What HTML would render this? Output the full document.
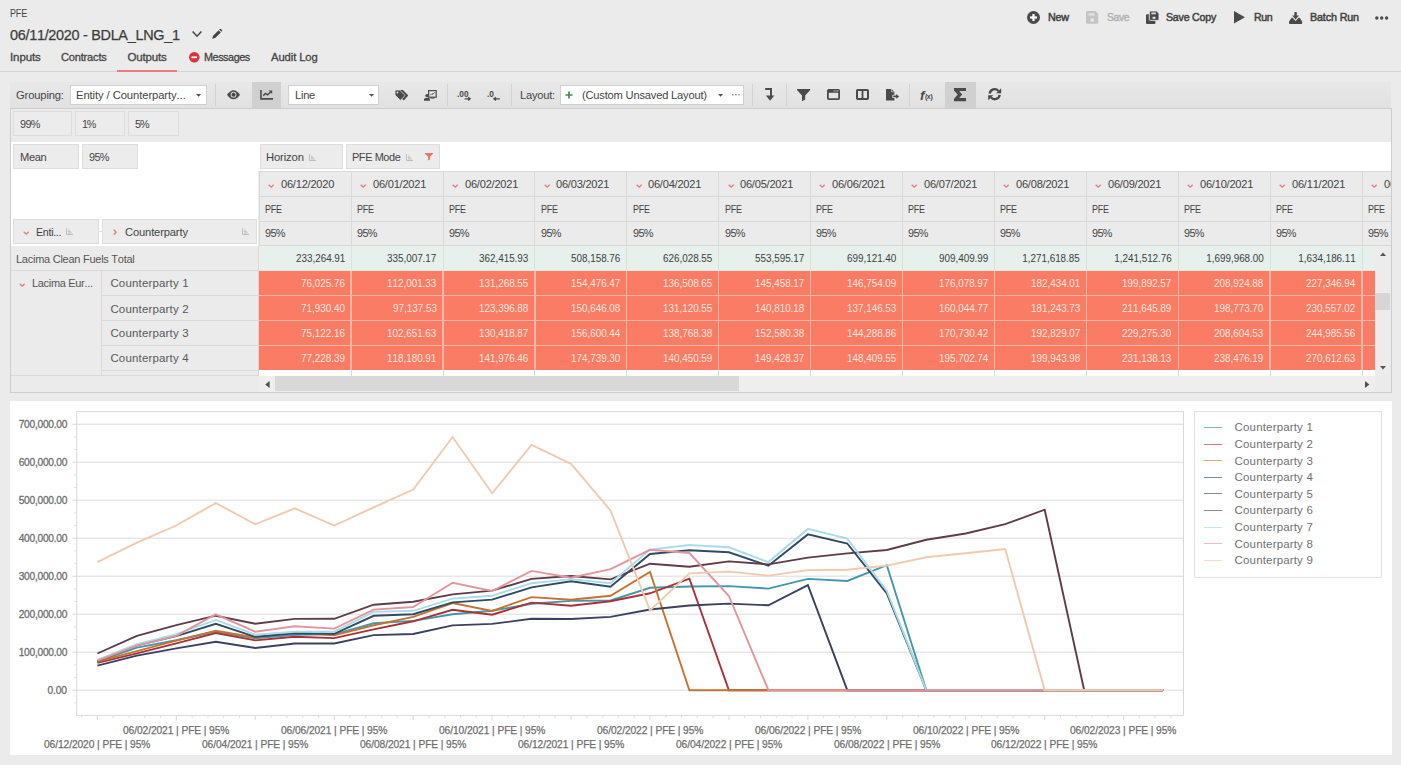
<!DOCTYPE html>
<html lang="en"><head><meta charset="utf-8"><title>PFE - 06/11/2020 - BDLA_LNG_1</title><style>
html,body{margin:0;padding:0}
body{width:1401px;height:765px;position:relative;overflow:hidden;background:#ebebeb;font-family:'Liberation Sans',sans-serif;font-kerning:none}
div,svg,span.t{position:absolute}
span.t{white-space:pre}
svg{overflow:visible}
</style></head><body>
<span class="t" style="top:6px;line-height:14px;font-size:11.5px;color:#444444;letter-spacing:-0.162px;left:9.70px;transform:scaleX(0.7800);transform-origin:0 50%;">PFE</span>
<span class="t" style="top:25px;line-height:19px;font-size:15px;color:#3c3c3c;-webkit-text-stroke:0.25px #3c3c3c;letter-spacing:-0.318px;left:10.00px;transform:scaleX(0.9633);transform-origin:0 50%;">06/11/2020 - BDLA_LNG_1</span>
<svg style="left:191px;top:29px" width="12" height="10" viewBox="0 0 12 10"><polyline points="1.6,2.6 6,7.2 10.4,2.6" fill="none" stroke="#444" stroke-width="1.5"/></svg>
<svg style="left:212px;top:29px" width="10" height="10" viewBox="0 0 10 10"><path d="M0.3,9.7 L0.9,6.9 L6.6,1.2 L8.8,3.4 L3.1,9.1 Z M7.2,0.6 L7.9,-0.1 Q8.4,-0.5 8.9,0 L10,1.1 Q10.5,1.6 10,2.1 L9.4,2.8 Z" fill="#444"/></svg>
<span class="t" style="top:50px;line-height:14px;font-size:11.5px;color:#444444;-webkit-text-stroke:0.3px #444444;letter-spacing:-0.106px;left:10.00px;">Inputs</span>
<span class="t" style="top:50px;line-height:14px;font-size:11.5px;color:#444444;-webkit-text-stroke:0.3px #444444;letter-spacing:-0.221px;left:61.20px;transform:scaleX(0.9653);transform-origin:0 50%;">Contracts</span>
<span class="t" style="top:50px;line-height:14px;font-size:11.5px;color:#444444;-webkit-text-stroke:0.3px #444444;letter-spacing:-0.164px;left:127.40px;">Outputs</span>
<svg style="left:188.9px;top:52px" width="10.6" height="10.6" viewBox="0 0 10.6 10.6"><circle cx="5.3" cy="5.3" r="5.3" fill="#d8343c"/><rect x="2.5" y="4.4" width="5.6" height="1.8" fill="#fff"/></svg>
<span class="t" style="top:50px;line-height:14px;font-size:11.5px;color:#444444;-webkit-text-stroke:0.3px #444444;letter-spacing:-0.472px;left:204.00px;transform:scaleX(0.9407);transform-origin:0 50%;">Messages</span>
<span class="t" style="top:50px;line-height:14px;font-size:11.5px;color:#444444;-webkit-text-stroke:0.3px #444444;letter-spacing:-0.115px;left:271.20px;transform:scaleX(0.9814);transform-origin:0 50%;">Audit Log</span>
<div style="left:0px;top:71px;width:1401px;height:1px;background:#d6d6d6;"></div>
<div style="left:117px;top:70px;width:60px;height:2px;background:#ea7d75;"></div>
<svg style="left:1027px;top:11px" width="13" height="13" viewBox="0 0 13 13"><circle cx="6.5" cy="6.5" r="6.5" fill="#4a4a4a"/><rect x="3" y="5.4" width="7" height="2.2" fill="#fff"/><rect x="5.4" y="3" width="2.2" height="7" fill="#fff"/></svg>
<span class="t" style="top:10px;line-height:14px;font-size:11px;color:#444444;-webkit-text-stroke:0.5px #444444;letter-spacing:-0.234px;left:1048.00px;transform:scaleX(0.9792);transform-origin:0 50%;">New</span>
<svg style="left:1086px;top:11.2px" width="12.2" height="12.7" viewBox="0 0 12.2 12.7"><path d="M0,1.2 Q0,0 1.2,0 H9.4 L12.2,2.8 V11.5 Q12.2,12.7 11,12.7 H1.2 Q0,12.7 0,11.5 Z" fill="#c4c4c4"/><rect x="2.4" y="2" width="6.2" height="2.7" fill="#dedede"/><rect x="4.5" y="7.5" width="3.3" height="3.1" fill="#e9e9e9"/></svg>
<span class="t" style="top:10px;line-height:14px;font-size:11px;color:#b0b0b0;-webkit-text-stroke:0.4px #b0b0b0;letter-spacing:-0.453px;left:1106.70px;transform:scaleX(0.9486);transform-origin:0 50%;">Save</span>
<svg style="left:1145.8px;top:11px" width="13.2" height="13" viewBox="0 0 13.2 13"><path d="M0,4.2 Q0,3.2 1,3.2 H8.4 Q9.4,3.2 9.4,4.2 V12 Q9.4,13 8.4,13 H1 Q0,13 0,12 Z" fill="#4a4a4a"/><path d="M3.3,1 Q3.3,0 4.3,0 H10.6 L13,2.4 V8.4 Q13,9.4 12,9.4 H4.3 Q3.3,9.4 3.3,8.4 Z" fill="#4a4a4a" stroke="#ebebeb" stroke-width="0.9"/><rect x="5.3" y="1.5" width="4.6" height="1.8" fill="#dcdcdc"/><rect x="6.6" y="5.8" width="2.8" height="2" fill="#ebebeb"/></svg>
<span class="t" style="top:10px;line-height:14px;font-size:11px;color:#444444;-webkit-text-stroke:0.5px #444444;letter-spacing:-0.234px;left:1166.40px;transform:scaleX(0.9664);transform-origin:0 50%;">Save Copy</span>
<svg style="left:1234px;top:11.2px" width="11" height="12.6" viewBox="0 0 11 12.6"><path d="M0,0 L11,6.3 L0,12.6 Z" fill="#4a4a4a"/></svg>
<span class="t" style="top:10px;line-height:14px;font-size:11px;color:#444444;-webkit-text-stroke:0.5px #444444;letter-spacing:-0.386px;left:1253.70px;transform:scaleX(0.9632);transform-origin:0 50%;">Run</span>
<svg style="left:1289px;top:11.6px" width="13.2" height="12" viewBox="0 0 13.2 12"><path d="M5.4,0 H7.8 V3.6 H10 L6.6,7.4 L3.2,3.6 H5.4 Z" fill="#4a4a4a"/><path d="M2.6,5.8 H3.6 L6.6,9 L9.6,5.8 H10.6 L13.2,9.4 V11 Q13.2,12 12.2,12 H1 Q0,12 0,11 V9.4 Z" fill="#4a4a4a"/></svg>
<span class="t" style="top:10px;line-height:14px;font-size:11px;color:#444444;-webkit-text-stroke:0.5px #444444;letter-spacing:-0.145px;left:1309.90px;transform:scaleX(0.9779);transform-origin:0 50%;">Batch Run</span>
<svg style="left:1375.4px;top:15.8px" width="13.4" height="4" viewBox="0 0 13.4 4"><circle cx="1.8" cy="2" r="1.7" fill="#4a4a4a"/><circle cx="6.7" cy="2" r="1.7" fill="#4a4a4a"/><circle cx="11.6" cy="2" r="1.7" fill="#4a4a4a"/></svg>
<div style="left:10px;top:82px;width:1381px;height:26px;background:linear-gradient(#e8e8e8,#e1e1e1);"></div>
<span class="t" style="top:88px;line-height:14px;font-size:11.5px;color:#444444;letter-spacing:-0.161px;left:16.00px;transform:scaleX(0.9751);transform-origin:0 50%;">Grouping:</span>
<div style="left:69.5px;top:85px;width:137.5px;height:19.6px;background:#fff;border:1px solid #d0d0d0;box-sizing:border-box;"></div>
<span class="t" style="top:88px;line-height:14px;font-size:11.5px;color:#444444;letter-spacing:-0.103px;left:76.00px;transform:scaleX(0.9798);transform-origin:0 50%;">Entity / Counterparty...</span>
<svg style="left:196.4px;top:93.9px" width="5.2" height="2.8" viewBox="0 0 5.2 2.8"><path d="M0,0 H5.2 L2.6,2.8 Z" fill="#555"/></svg>
<div style="left:215px;top:84px;width:1px;height:22px;background:#d2d2d2;"></div>
<svg style="left:226.6px;top:90px" width="13" height="9.5" viewBox="0 0 13 9.5"><path d="M0,4.75 Q6.5,-4.4 13,4.75 Q6.5,13.9 0,4.75 Z" fill="#4a4a4a"/><circle cx="6.5" cy="4.75" r="2.9" fill="#d6d6d6"/><circle cx="6.5" cy="4.75" r="2" fill="#4a4a4a"/></svg>
<div style="left:252.2px;top:82px;width:28.8px;height:26px;background:#d0d0d0;"></div>
<svg style="left:260.2px;top:90.2px" width="13.2" height="9.8" viewBox="0 0 13.2 9.8"><path d="M0.95,0 V8.85 H13" fill="none" stroke="#4a4a4a" stroke-width="1.6"/><path d="M3.2,5.6 L5.6,3.4 L7.6,4.8 L10.6,2" fill="none" stroke="#4a4a4a" stroke-width="1.5"/><path d="M8.6,0.5 H12.2 V4.1 Z" fill="#4a4a4a"/></svg>
<div style="left:288.3px;top:85px;width:91.2px;height:19.6px;background:#fff;border:1px solid #d0d0d0;box-sizing:border-box;"></div>
<span class="t" style="top:88px;line-height:14px;font-size:11.5px;color:#444444;letter-spacing:-0.250px;left:294.80px;transform:scaleX(0.9667);transform-origin:0 50%;">Line</span>
<svg style="left:369px;top:93.9px" width="5.2" height="2.8" viewBox="0 0 5.2 2.8"><path d="M0,0 H5.2 L2.6,2.8 Z" fill="#555"/></svg>
<svg style="left:394.6px;top:89.6px" width="13.4" height="10.8" viewBox="0 0 13.4 10.8"><path d="M0,0.9 Q0,0 0.9,0 H4.6 L9.6,5 Q10.1,5.5 9.6,6 L5.9,10 Q5.4,10.5 4.9,10 L0,5 Z" fill="#4a4a4a" transform="translate(3.3,0)"/><path d="M0,0.9 Q0,0 0.9,0 H4.6 L9.6,5 Q10.1,5.5 9.6,6 L5.9,10 Q5.4,10.5 4.9,10 L0,5 Z" fill="#4a4a4a" stroke="#e3e3e3" stroke-width="0.8"/><circle cx="2.4" cy="2.5" r="0.95" fill="#e3e3e3"/></svg>
<svg style="left:424.2px;top:89.6px" width="12.8" height="10.8" viewBox="0 0 12.8 10.8"><rect x="4.6" y="0.6" width="7.6" height="6.6" fill="none" stroke="#4a4a4a" stroke-width="1.2"/><path d="M6.2,5.4 L8,3.6 L9,4.4 L10.6,2.4" fill="none" stroke="#4a4a4a" stroke-width="0.9"/><circle cx="3" cy="5.6" r="1.7" fill="#4a4a4a"/><path d="M0,10.8 V9.6 Q0,7.8 3,7.8 Q6,7.8 6,9.6 V10.8 Z" fill="#4a4a4a"/><rect x="6.4" y="7.6" width="4" height="1" fill="#4a4a4a"/></svg>
<div style="left:447.2px;top:84px;width:1px;height:22px;background:#d2d2d2;"></div>
<svg style="left:457.4px;top:89.6px" width="14" height="11" viewBox="0 0 14 11"><text x="0" y="6.5" font-family="Liberation Sans,sans-serif" font-size="8.3" font-weight="bold" fill="#4a4a4a">.00</text><path d="M7.6,8.8 H13 M11.2,7.1 L13.3,8.8 L11.2,10.5" fill="none" stroke="#4a4a4a" stroke-width="1.15"/></svg>
<svg style="left:487px;top:89.6px" width="14" height="11" viewBox="0 0 14 11"><text x="0" y="6.5" font-family="Liberation Sans,sans-serif" font-size="8.3" font-weight="bold" fill="#4a4a4a">.0</text><path d="M7,8.8 H12.8 M8.9,7.1 L6.8,8.8 L8.9,10.5" fill="none" stroke="#4a4a4a" stroke-width="1.15"/></svg>
<div style="left:510.6px;top:84px;width:1px;height:22px;background:#d2d2d2;"></div>
<span class="t" style="top:88px;line-height:14px;font-size:11.5px;color:#444444;letter-spacing:-0.219px;left:520.00px;transform:scaleX(0.9664);transform-origin:0 50%;">Layout:</span>
<div style="left:560px;top:85px;width:183.6px;height:19.6px;background:#fff;border:1px solid #d0d0d0;box-sizing:border-box;"></div>
<svg style="left:564.6px;top:91px" width="8" height="8" viewBox="0 0 8 8"><path d="M4,0.4 V7.6 M0.4,4 H7.6" stroke="#3f8f55" stroke-width="1.7" fill="none"/></svg>
<span class="t" style="top:88px;line-height:14px;font-size:11.5px;color:#444444;letter-spacing:-0.202px;left:582.00px;transform:scaleX(0.9678);transform-origin:0 50%;">(Custom Unsaved Layout)</span>
<svg style="left:718.4px;top:93.9px" width="5.2" height="2.8" viewBox="0 0 5.2 2.8"><path d="M0,0 H5.2 L2.6,2.8 Z" fill="#555"/></svg>
<svg style="left:732px;top:94.3px" width="8" height="1.6" viewBox="0 0 8 1.6"><circle cx="0.8" cy="0.8" r="0.75" fill="#666"/><circle cx="3.9" cy="0.8" r="0.75" fill="#666"/><circle cx="7" cy="0.8" r="0.75" fill="#666"/></svg>
<div style="left:752.4px;top:84px;width:1px;height:22px;background:#d2d2d2;"></div>
<svg style="left:764.8px;top:88.4px" width="10" height="13" viewBox="0 0 10 13"><path d="M0.2,1 H6 V9" fill="none" stroke="#4a4a4a" stroke-width="1.9"/><path d="M0.9,7.6 L5.1,12.7 L9.3,7.6 Z" fill="#4a4a4a"/></svg>
<div style="left:786.4px;top:84px;width:1px;height:22px;background:#d2d2d2;"></div>
<svg style="left:797.4px;top:88.6px" width="13.2" height="12.2" viewBox="0 0 13.2 12.2"><path d="M0,0 H13.2 V1 L8.2,6.4 V10.6 L5,12.2 V6.4 L0,1 Z" fill="#4a4a4a"/></svg>
<svg style="left:826.8px;top:89.2px" width="13" height="11" viewBox="0 0 13 11"><rect x="0.9" y="0.9" width="11.2" height="9.2" rx="0.8" fill="none" stroke="#4a4a4a" stroke-width="1.8"/><rect x="0.9" y="0.9" width="11.2" height="2.9" fill="#4a4a4a"/><rect x="6.6" y="1.4" width="1.1" height="1.1" fill="#cfcfcf"/><rect x="8.4" y="1.4" width="1.1" height="1.1" fill="#cfcfcf"/><rect x="10.2" y="1.4" width="1.1" height="1.1" fill="#cfcfcf"/></svg>
<svg style="left:856px;top:89.3px" width="13" height="11" viewBox="0 0 13 11"><rect x="1" y="1" width="11" height="9" rx="0.8" fill="none" stroke="#4a4a4a" stroke-width="2"/><rect x="5.6" y="1" width="1.8" height="9" fill="#4a4a4a"/></svg>
<svg style="left:885.6px;top:89px" width="13.2" height="11.4" viewBox="0 0 13.2 11.4"><path d="M0,0 H5.6 L8.4,2.8 V5.8 H6.4 V9 H8.4 V11.4 H0 Z" fill="#4a4a4a"/><path d="M5.6,0 V2.8 H8.4" fill="none" stroke="#e3e3e3" stroke-width="0.7"/><path d="M7.2,6.6 H10.2 V5 L13.2,7.4 L10.2,9.8 V8.2 H7.2 Z" fill="#4a4a4a"/></svg>
<div style="left:908.6px;top:84px;width:1px;height:22px;background:#d2d2d2;"></div>
<svg style="left:919.6px;top:88.6px" width="14" height="13" viewBox="0 0 14 13"><text x="0" y="10.6" font-family="Liberation Sans,sans-serif" font-style="italic" font-weight="bold" font-size="13.5" fill="#4a4a4a">f</text><text x="4.9" y="10.4" font-family="Liberation Sans,sans-serif" font-weight="bold" font-size="7" fill="#4a4a4a" letter-spacing="-0.35">(x)</text></svg>
<div style="left:945.4px;top:82px;width:30.2px;height:26px;background:#d0d0d0;"></div>
<svg style="left:954.2px;top:88px" width="12" height="13.2" viewBox="0 0 12 13.2"><path d="M0,0 H12 V3.1 H5.2 L8.2,6.6 L5.2,10.1 H12 V13.2 H0 V10.7 L3.7,6.6 L0,2.5 Z" fill="#4a4a4a"/></svg>
<svg style="left:987.6px;top:88.4px" width="13.4" height="12.4" viewBox="0 0 13.4 12.4"><path d="M1.7,5.6 A5,5 0 0 1 10.4,2.9" fill="none" stroke="#4a4a4a" stroke-width="2.3"/><path d="M13.2,0.2 V5.2 H8.2 Z" fill="#4a4a4a"/><path d="M11.7,6.8 A5,5 0 0 1 3,9.5" fill="none" stroke="#4a4a4a" stroke-width="2.3"/><path d="M0.2,12.2 V7.2 H5.2 Z" fill="#4a4a4a"/></svg>
<div style="left:10px;top:107.5px;width:1381.5px;height:285px;background:#ebebeb;border:1px solid #cdcdcd;box-sizing:border-box;"></div>
<div style="left:11px;top:141.5px;width:1379.5px;height:104.7px;background:#fff;"></div>
<div style="left:13px;top:111px;width:59px;height:25.4px;background:#ececec;border:1px solid #dddddd;box-sizing:border-box;"></div>
<span class="t" style="top:117px;line-height:14px;font-size:11.5px;color:#444444;letter-spacing:-0.670px;left:19.50px;transform:scaleX(0.9450);transform-origin:0 50%;">99%</span>
<div style="left:75px;top:111px;width:50.4px;height:25.4px;background:#ececec;border:1px solid #dddddd;box-sizing:border-box;"></div>
<span class="t" style="top:117px;line-height:14px;font-size:11.5px;color:#444444;letter-spacing:-1.192px;left:82.00px;transform:scaleX(0.9331);transform-origin:0 50%;">1%</span>
<div style="left:128px;top:111px;width:51.4px;height:25.4px;background:#ececec;border:1px solid #dddddd;box-sizing:border-box;"></div>
<span class="t" style="top:117px;line-height:14px;font-size:11.5px;color:#444444;letter-spacing:-1.078px;left:135.00px;transform:scaleX(0.9391);transform-origin:0 50%;">5%</span>
<div style="left:13px;top:144.2px;width:66.2px;height:24.6px;background:#ececec;border:1px solid #dddddd;box-sizing:border-box;"></div>
<span class="t" style="top:150px;line-height:14px;font-size:11.5px;color:#444444;letter-spacing:-0.342px;left:20.00px;transform:scaleX(0.9656);transform-origin:0 50%;">Mean</span>
<div style="left:82px;top:144.2px;width:56.4px;height:24.6px;background:#ececec;border:1px solid #dddddd;box-sizing:border-box;"></div>
<span class="t" style="top:150px;line-height:14px;font-size:11.5px;color:#444444;letter-spacing:-0.670px;left:88.70px;transform:scaleX(0.9450);transform-origin:0 50%;">95%</span>
<div style="left:259.5px;top:144.2px;width:83.6px;height:24.6px;background:#ececec;border:1px solid #dddddd;box-sizing:border-box;"></div>
<span class="t" style="top:150px;line-height:14px;font-size:11.5px;color:#444444;letter-spacing:-0.140px;left:266.20px;transform:scaleX(0.9793);transform-origin:0 50%;">Horizon</span>
<svg style="left:309.4px;top:153.6px" width="7" height="7" viewBox="0 0 7 7"><path d="M0.5,0 V6.5 H7 M2,2 H3.4 M2,3.5 H4.6 M2,5 H5.8" fill="none" stroke="#b9b9b9" stroke-width="0.9"/></svg>
<div style="left:346.2px;top:144.2px;width:93.8px;height:24.6px;background:#ececec;border:1px solid #dddddd;box-sizing:border-box;"></div>
<span class="t" style="top:150px;line-height:14px;font-size:11.5px;color:#444444;letter-spacing:-0.424px;left:352.40px;transform:scaleX(0.9482);transform-origin:0 50%;">PFE Mode</span>
<svg style="left:405.6px;top:153.6px" width="7" height="7" viewBox="0 0 7 7"><path d="M0.5,0 V6.5 H7 M2,2 H3.4 M2,3.5 H4.6 M2,5 H5.8" fill="none" stroke="#b9b9b9" stroke-width="0.9"/></svg>
<svg style="left:425px;top:153px" width="8" height="7.4" viewBox="0 0 8 7.4"><path d="M0,0 H8 V0.7 L4.9,3.8 V6.4 L3.1,7.4 V3.8 L0,0.7 Z" fill="#ea7466"/></svg>
<div style="left:13px;top:218.8px;width:86.4px;height:24.8px;background:#ececec;border:1px solid #dddddd;box-sizing:border-box;"></div>
<div style="left:102.4px;top:218.8px;width:154.6px;height:24.8px;background:#ececec;border:1px solid #dddddd;box-sizing:border-box;"></div>
<div style="left:99.4px;top:231.3px;width:3px;height:1px;background:#dddddd;"></div>
<svg style="left:23.1px;top:230.9px" width="6.4" height="4" viewBox="0 0 6.4 4"><polyline points="0.7,0.7 3.2,3.2 5.7,0.7" fill="none" stroke="#ec786d" stroke-width="1.25"/></svg>
<span class="t" style="top:225px;line-height:14px;font-size:11.5px;color:#444444;letter-spacing:-0.349px;left:35.70px;transform:scaleX(0.9336);transform-origin:0 50%;">Enti...</span>
<svg style="left:65.6px;top:228.2px" width="7" height="7" viewBox="0 0 7 7"><path d="M0.5,0 V6.5 H7 M2,2 H3.4 M2,3.5 H4.6 M2,5 H5.8" fill="none" stroke="#b9b9b9" stroke-width="0.9"/></svg>
<svg style="left:113.3px;top:228.7px" width="4" height="6.4" viewBox="0 0 4 6.4"><polyline points="0.7,0.7 3.2,3.2 0.7,5.7" fill="none" stroke="#ec786d" stroke-width="1.25"/></svg>
<span class="t" style="top:225px;line-height:14px;font-size:11.5px;color:#444444;letter-spacing:-0.163px;left:124.90px;transform:scaleX(0.9738);transform-origin:0 50%;">Counterparty</span>
<svg style="left:242px;top:228.2px" width="7" height="7" viewBox="0 0 7 7"><path d="M0.5,0 V6.5 H7 M2,2 H3.4 M2,3.5 H4.6 M2,5 H5.8" fill="none" stroke="#b9b9b9" stroke-width="0.9"/></svg>
<div style="left:258px;top:171px;width:1132.5px;height:75px;overflow:hidden;background:#ebebeb">
<div style="left:0.7px;top:0px;width:1132px;height:1px;background:#d9d9d9;"></div>
<div style="left:0.7px;top:25px;width:1132px;height:1px;background:#d9d9d9;"></div>
<div style="left:0.7px;top:50px;width:1132px;height:1px;background:#d9d9d9;"></div>
<div style="left:0.7px;top:0px;width:1px;height:75px;background:#d9d9d9;"></div>
<div style="left:92.6px;top:0px;width:1px;height:75px;background:#d9d9d9;"></div>
<div style="left:184.5px;top:0px;width:1px;height:75px;background:#d9d9d9;"></div>
<div style="left:276.4px;top:0px;width:1px;height:75px;background:#d9d9d9;"></div>
<div style="left:368.3px;top:0px;width:1px;height:75px;background:#d9d9d9;"></div>
<div style="left:460.2px;top:0px;width:1px;height:75px;background:#d9d9d9;"></div>
<div style="left:552.1px;top:0px;width:1px;height:75px;background:#d9d9d9;"></div>
<div style="left:644.0px;top:0px;width:1px;height:75px;background:#d9d9d9;"></div>
<div style="left:735.9px;top:0px;width:1px;height:75px;background:#d9d9d9;"></div>
<div style="left:827.8px;top:0px;width:1px;height:75px;background:#d9d9d9;"></div>
<div style="left:919.7px;top:0px;width:1px;height:75px;background:#d9d9d9;"></div>
<div style="left:1011.6px;top:0px;width:1px;height:75px;background:#d9d9d9;"></div>
<div style="left:1103.5px;top:0px;width:1px;height:75px;background:#d9d9d9;"></div>
<div style="left:1195.4px;top:0px;width:1px;height:75px;background:#d9d9d9;"></div>
</div>
<svg style="left:268.0px;top:183.7px" width="6.4" height="4" viewBox="0 0 6.4 4"><polyline points="0.7,0.7 3.2,3.2 5.7,0.7" fill="none" stroke="#ec786d" stroke-width="1.25"/></svg>
<span class="t" style="top:177px;line-height:14px;font-size:11.5px;color:#444444;letter-spacing:-0.240px;left:280.70px;transform:scaleX(0.9638);transform-origin:0 50%;">06/12/2020</span>
<span class="t" style="top:202px;line-height:14px;font-size:11.5px;color:#444444;letter-spacing:-0.290px;left:265.00px;transform:scaleX(0.7800);transform-origin:0 50%;">PFE</span>
<span class="t" style="top:226px;line-height:14px;font-size:11.5px;color:#444444;letter-spacing:-0.670px;left:265.00px;transform:scaleX(0.9450);transform-origin:0 50%;">95%</span>
<svg style="left:359.90000000000003px;top:183.7px" width="6.4" height="4" viewBox="0 0 6.4 4"><polyline points="0.7,0.7 3.2,3.2 5.7,0.7" fill="none" stroke="#ec786d" stroke-width="1.25"/></svg>
<span class="t" style="top:177px;line-height:14px;font-size:11.5px;color:#444444;letter-spacing:-0.240px;left:372.60px;transform:scaleX(0.9638);transform-origin:0 50%;">06/01/2021</span>
<span class="t" style="top:202px;line-height:14px;font-size:11.5px;color:#444444;letter-spacing:-0.290px;left:356.90px;transform:scaleX(0.7800);transform-origin:0 50%;">PFE</span>
<span class="t" style="top:226px;line-height:14px;font-size:11.5px;color:#444444;letter-spacing:-0.670px;left:356.90px;transform:scaleX(0.9450);transform-origin:0 50%;">95%</span>
<svg style="left:451.8px;top:183.7px" width="6.4" height="4" viewBox="0 0 6.4 4"><polyline points="0.7,0.7 3.2,3.2 5.7,0.7" fill="none" stroke="#ec786d" stroke-width="1.25"/></svg>
<span class="t" style="top:177px;line-height:14px;font-size:11.5px;color:#444444;letter-spacing:-0.240px;left:464.50px;transform:scaleX(0.9638);transform-origin:0 50%;">06/02/2021</span>
<span class="t" style="top:202px;line-height:14px;font-size:11.5px;color:#444444;letter-spacing:-0.290px;left:448.80px;transform:scaleX(0.7800);transform-origin:0 50%;">PFE</span>
<span class="t" style="top:226px;line-height:14px;font-size:11.5px;color:#444444;letter-spacing:-0.670px;left:448.80px;transform:scaleX(0.9450);transform-origin:0 50%;">95%</span>
<svg style="left:543.7px;top:183.7px" width="6.4" height="4" viewBox="0 0 6.4 4"><polyline points="0.7,0.7 3.2,3.2 5.7,0.7" fill="none" stroke="#ec786d" stroke-width="1.25"/></svg>
<span class="t" style="top:177px;line-height:14px;font-size:11.5px;color:#444444;letter-spacing:-0.240px;left:556.40px;transform:scaleX(0.9638);transform-origin:0 50%;">06/03/2021</span>
<span class="t" style="top:202px;line-height:14px;font-size:11.5px;color:#444444;letter-spacing:-0.290px;left:540.70px;transform:scaleX(0.7800);transform-origin:0 50%;">PFE</span>
<span class="t" style="top:226px;line-height:14px;font-size:11.5px;color:#444444;letter-spacing:-0.670px;left:540.70px;transform:scaleX(0.9450);transform-origin:0 50%;">95%</span>
<svg style="left:635.5999999999999px;top:183.7px" width="6.4" height="4" viewBox="0 0 6.4 4"><polyline points="0.7,0.7 3.2,3.2 5.7,0.7" fill="none" stroke="#ec786d" stroke-width="1.25"/></svg>
<span class="t" style="top:177px;line-height:14px;font-size:11.5px;color:#444444;letter-spacing:-0.240px;left:648.30px;transform:scaleX(0.9638);transform-origin:0 50%;">06/04/2021</span>
<span class="t" style="top:202px;line-height:14px;font-size:11.5px;color:#444444;letter-spacing:-0.290px;left:632.60px;transform:scaleX(0.7800);transform-origin:0 50%;">PFE</span>
<span class="t" style="top:226px;line-height:14px;font-size:11.5px;color:#444444;letter-spacing:-0.670px;left:632.60px;transform:scaleX(0.9450);transform-origin:0 50%;">95%</span>
<svg style="left:727.5px;top:183.7px" width="6.4" height="4" viewBox="0 0 6.4 4"><polyline points="0.7,0.7 3.2,3.2 5.7,0.7" fill="none" stroke="#ec786d" stroke-width="1.25"/></svg>
<span class="t" style="top:177px;line-height:14px;font-size:11.5px;color:#444444;letter-spacing:-0.240px;left:740.20px;transform:scaleX(0.9638);transform-origin:0 50%;">06/05/2021</span>
<span class="t" style="top:202px;line-height:14px;font-size:11.5px;color:#444444;letter-spacing:-0.290px;left:724.50px;transform:scaleX(0.7800);transform-origin:0 50%;">PFE</span>
<span class="t" style="top:226px;line-height:14px;font-size:11.5px;color:#444444;letter-spacing:-0.670px;left:724.50px;transform:scaleX(0.9450);transform-origin:0 50%;">95%</span>
<svg style="left:819.4000000000001px;top:183.7px" width="6.4" height="4" viewBox="0 0 6.4 4"><polyline points="0.7,0.7 3.2,3.2 5.7,0.7" fill="none" stroke="#ec786d" stroke-width="1.25"/></svg>
<span class="t" style="top:177px;line-height:14px;font-size:11.5px;color:#444444;letter-spacing:-0.240px;left:832.10px;transform:scaleX(0.9638);transform-origin:0 50%;">06/06/2021</span>
<span class="t" style="top:202px;line-height:14px;font-size:11.5px;color:#444444;letter-spacing:-0.290px;left:816.40px;transform:scaleX(0.7800);transform-origin:0 50%;">PFE</span>
<span class="t" style="top:226px;line-height:14px;font-size:11.5px;color:#444444;letter-spacing:-0.670px;left:816.40px;transform:scaleX(0.9450);transform-origin:0 50%;">95%</span>
<svg style="left:911.3px;top:183.7px" width="6.4" height="4" viewBox="0 0 6.4 4"><polyline points="0.7,0.7 3.2,3.2 5.7,0.7" fill="none" stroke="#ec786d" stroke-width="1.25"/></svg>
<span class="t" style="top:177px;line-height:14px;font-size:11.5px;color:#444444;letter-spacing:-0.240px;left:924.00px;transform:scaleX(0.9638);transform-origin:0 50%;">06/07/2021</span>
<span class="t" style="top:202px;line-height:14px;font-size:11.5px;color:#444444;letter-spacing:-0.290px;left:908.30px;transform:scaleX(0.7800);transform-origin:0 50%;">PFE</span>
<span class="t" style="top:226px;line-height:14px;font-size:11.5px;color:#444444;letter-spacing:-0.670px;left:908.30px;transform:scaleX(0.9450);transform-origin:0 50%;">95%</span>
<svg style="left:1003.2px;top:183.7px" width="6.4" height="4" viewBox="0 0 6.4 4"><polyline points="0.7,0.7 3.2,3.2 5.7,0.7" fill="none" stroke="#ec786d" stroke-width="1.25"/></svg>
<span class="t" style="top:177px;line-height:14px;font-size:11.5px;color:#444444;letter-spacing:-0.240px;left:1015.90px;transform:scaleX(0.9638);transform-origin:0 50%;">06/08/2021</span>
<span class="t" style="top:202px;line-height:14px;font-size:11.5px;color:#444444;letter-spacing:-0.290px;left:1000.20px;transform:scaleX(0.7800);transform-origin:0 50%;">PFE</span>
<span class="t" style="top:226px;line-height:14px;font-size:11.5px;color:#444444;letter-spacing:-0.670px;left:1000.20px;transform:scaleX(0.9450);transform-origin:0 50%;">95%</span>
<svg style="left:1095.1px;top:183.7px" width="6.4" height="4" viewBox="0 0 6.4 4"><polyline points="0.7,0.7 3.2,3.2 5.7,0.7" fill="none" stroke="#ec786d" stroke-width="1.25"/></svg>
<span class="t" style="top:177px;line-height:14px;font-size:11.5px;color:#444444;letter-spacing:-0.240px;left:1107.80px;transform:scaleX(0.9638);transform-origin:0 50%;">06/09/2021</span>
<span class="t" style="top:202px;line-height:14px;font-size:11.5px;color:#444444;letter-spacing:-0.290px;left:1092.10px;transform:scaleX(0.7800);transform-origin:0 50%;">PFE</span>
<span class="t" style="top:226px;line-height:14px;font-size:11.5px;color:#444444;letter-spacing:-0.670px;left:1092.10px;transform:scaleX(0.9450);transform-origin:0 50%;">95%</span>
<svg style="left:1187.0px;top:183.7px" width="6.4" height="4" viewBox="0 0 6.4 4"><polyline points="0.7,0.7 3.2,3.2 5.7,0.7" fill="none" stroke="#ec786d" stroke-width="1.25"/></svg>
<span class="t" style="top:177px;line-height:14px;font-size:11.5px;color:#444444;letter-spacing:-0.240px;left:1199.70px;transform:scaleX(0.9638);transform-origin:0 50%;">06/10/2021</span>
<span class="t" style="top:202px;line-height:14px;font-size:11.5px;color:#444444;letter-spacing:-0.290px;left:1184.00px;transform:scaleX(0.7800);transform-origin:0 50%;">PFE</span>
<span class="t" style="top:226px;line-height:14px;font-size:11.5px;color:#444444;letter-spacing:-0.670px;left:1184.00px;transform:scaleX(0.9450);transform-origin:0 50%;">95%</span>
<svg style="left:1278.9px;top:183.7px" width="6.4" height="4" viewBox="0 0 6.4 4"><polyline points="0.7,0.7 3.2,3.2 5.7,0.7" fill="none" stroke="#ec786d" stroke-width="1.25"/></svg>
<span class="t" style="top:177px;line-height:14px;font-size:11.5px;color:#444444;letter-spacing:-0.240px;left:1291.60px;transform:scaleX(0.9638);transform-origin:0 50%;">06/11/2021</span>
<span class="t" style="top:202px;line-height:14px;font-size:11.5px;color:#444444;letter-spacing:-0.290px;left:1275.90px;transform:scaleX(0.7800);transform-origin:0 50%;">PFE</span>
<span class="t" style="top:226px;line-height:14px;font-size:11.5px;color:#444444;letter-spacing:-0.670px;left:1275.90px;transform:scaleX(0.9450);transform-origin:0 50%;">95%</span>
<svg style="left:1370.8000000000002px;top:183.7px" width="6.4" height="4" viewBox="0 0 6.4 4"><polyline points="0.7,0.7 3.2,3.2 5.7,0.7" fill="none" stroke="#ec786d" stroke-width="1.25"/></svg>
<div style="left:1362.5px;top:172px;width:28.0px;height:74px;overflow:hidden">
<span class="t" style="top:5px;line-height:14px;font-size:11.5px;color:#444444;letter-spacing:-0.240px;left:21.00px;transform:scaleX(0.9638);transform-origin:0 50%;">06/12/2021</span>
</div>
<span class="t" style="top:202px;line-height:14px;font-size:11.5px;color:#444444;letter-spacing:-0.290px;left:1367.80px;transform:scaleX(0.7800);transform-origin:0 50%;">PFE</span>
<span class="t" style="top:226px;line-height:14px;font-size:11.5px;color:#444444;letter-spacing:-0.670px;left:1367.80px;transform:scaleX(0.9450);transform-origin:0 50%;">95%</span>
<div style="left:259px;top:245.4px;width:1131.5px;height:1px;background:#d9d9d9;"></div>
<div style="left:11px;top:246px;width:248.5px;height:25px;background:#ebebeb;"></div>
<div style="left:11px;top:270.4px;width:248.5px;height:1px;background:#d9d9d9;"></div>
<span class="t" style="top:252px;line-height:14px;font-size:11.5px;color:#555;letter-spacing:-0.264px;left:16.20px;transform:scaleX(0.9555);transform-origin:0 50%;">Lacima Clean Fuels Total</span>
<div style="left:259.3px;top:246.2px;width:1115.4px;height:24.2px;background:#e5f1ea;"></div>
<div style="left:259px;top:270.4px;width:1115.7px;height:1px;background:#dfe6e2;"></div>
<span class="t" style="top:251px;line-height:14px;font-size:11.5px;color:#3f3f3f;letter-spacing:-0.026px;right:1056.12px;transform:scaleX(0.8600);transform-origin:100% 50%;">233,264.91</span>
<div style="left:350.6px;top:246.2px;width:1px;height:24.2px;background:#d9e2dd;"></div>
<span class="t" style="top:251px;line-height:14px;font-size:11.5px;color:#3f3f3f;letter-spacing:-0.026px;right:964.22px;transform:scaleX(0.8600);transform-origin:100% 50%;">335,007.17</span>
<div style="left:442.5px;top:246.2px;width:1px;height:24.2px;background:#d9e2dd;"></div>
<span class="t" style="top:251px;line-height:14px;font-size:11.5px;color:#3f3f3f;letter-spacing:-0.026px;right:872.32px;transform:scaleX(0.8600);transform-origin:100% 50%;">362,415.93</span>
<div style="left:534.4000000000001px;top:246.2px;width:1px;height:24.2px;background:#d9e2dd;"></div>
<span class="t" style="top:251px;line-height:14px;font-size:11.5px;color:#3f3f3f;letter-spacing:-0.026px;right:780.42px;transform:scaleX(0.8600);transform-origin:100% 50%;">508,158.76</span>
<div style="left:626.3px;top:246.2px;width:1px;height:24.2px;background:#d9e2dd;"></div>
<span class="t" style="top:251px;line-height:14px;font-size:11.5px;color:#3f3f3f;letter-spacing:-0.026px;right:688.52px;transform:scaleX(0.8600);transform-origin:100% 50%;">626,028.55</span>
<div style="left:718.2px;top:246.2px;width:1px;height:24.2px;background:#d9e2dd;"></div>
<span class="t" style="top:251px;line-height:14px;font-size:11.5px;color:#3f3f3f;letter-spacing:-0.026px;right:596.62px;transform:scaleX(0.8600);transform-origin:100% 50%;">553,595.17</span>
<div style="left:810.1000000000001px;top:246.2px;width:1px;height:24.2px;background:#d9e2dd;"></div>
<span class="t" style="top:251px;line-height:14px;font-size:11.5px;color:#3f3f3f;letter-spacing:-0.026px;right:504.72px;transform:scaleX(0.8600);transform-origin:100% 50%;">699,121.40</span>
<div style="left:902.0px;top:246.2px;width:1px;height:24.2px;background:#d9e2dd;"></div>
<span class="t" style="top:251px;line-height:14px;font-size:11.5px;color:#3f3f3f;letter-spacing:-0.026px;right:412.82px;transform:scaleX(0.8600);transform-origin:100% 50%;">909,409.99</span>
<div style="left:993.9000000000001px;top:246.2px;width:1px;height:24.2px;background:#d9e2dd;"></div>
<span class="t" style="top:251px;line-height:14px;font-size:11.5px;color:#3f3f3f;letter-spacing:-0.032px;right:320.93px;transform:scaleX(0.8600);transform-origin:100% 50%;">1,271,618.85</span>
<div style="left:1085.8px;top:246.2px;width:1px;height:24.2px;background:#d9e2dd;"></div>
<span class="t" style="top:251px;line-height:14px;font-size:11.5px;color:#3f3f3f;letter-spacing:-0.032px;right:229.03px;transform:scaleX(0.8600);transform-origin:100% 50%;">1,241,512.76</span>
<div style="left:1177.7px;top:246.2px;width:1px;height:24.2px;background:#d9e2dd;"></div>
<span class="t" style="top:251px;line-height:14px;font-size:11.5px;color:#3f3f3f;letter-spacing:-0.032px;right:137.13px;transform:scaleX(0.8600);transform-origin:100% 50%;">1,699,968.00</span>
<div style="left:1269.6000000000001px;top:246.2px;width:1px;height:24.2px;background:#d9e2dd;"></div>
<span class="t" style="top:251px;line-height:14px;font-size:11.5px;color:#3f3f3f;letter-spacing:-0.032px;right:45.23px;transform:scaleX(0.8600);transform-origin:100% 50%;">1,634,186.11</span>
<div style="left:1361.5000000000002px;top:246.2px;width:1px;height:24.2px;background:#d9e2dd;"></div>
<div style="left:11px;top:271px;width:91px;height:104.5px;background:#ebebeb;"></div>
<div style="left:101.4px;top:271px;width:1px;height:104.5px;background:#d9d9d9;"></div>
<svg style="left:19.2px;top:283.2px" width="6.4" height="4" viewBox="0 0 6.4 4"><polyline points="0.7,0.7 3.2,3.2 5.7,0.7" fill="none" stroke="#ec786d" stroke-width="1.25"/></svg>
<span class="t" style="top:276px;line-height:14px;font-size:11.5px;color:#555;letter-spacing:-0.296px;left:32.00px;transform:scaleX(0.9502);transform-origin:0 50%;">Lacima Eur...</span>
<div style="left:259.3px;top:271px;width:1115.4px;height:99px;background:#fa7c64;"></div>
<div style="left:102.4px;top:271.0px;width:156.8px;height:24.9px;background:#ebebeb;"></div>
<div style="left:102.4px;top:295.2px;width:156.8px;height:1px;background:#d9d9d9;"></div>
<span class="t" style="top:276px;line-height:14px;font-size:11.5px;color:#595959;letter-spacing:0.163px;left:110.40px;">Counterparty 1</span>
<span class="t" style="top:276px;line-height:14px;font-size:11.5px;color:#fee6df;letter-spacing:-0.030px;right:1056.33px;transform:scaleX(0.8600);transform-origin:100% 50%;">76,025.76</span>
<span class="t" style="top:276px;line-height:14px;font-size:11.5px;color:#fee6df;letter-spacing:-0.026px;right:964.42px;transform:scaleX(0.8600);transform-origin:100% 50%;">112,001.33</span>
<span class="t" style="top:276px;line-height:14px;font-size:11.5px;color:#fee6df;letter-spacing:-0.026px;right:872.52px;transform:scaleX(0.8600);transform-origin:100% 50%;">131,268.55</span>
<span class="t" style="top:276px;line-height:14px;font-size:11.5px;color:#fee6df;letter-spacing:-0.026px;right:780.62px;transform:scaleX(0.8600);transform-origin:100% 50%;">154,476.47</span>
<span class="t" style="top:276px;line-height:14px;font-size:11.5px;color:#fee6df;letter-spacing:-0.026px;right:688.72px;transform:scaleX(0.8600);transform-origin:100% 50%;">136,508.65</span>
<span class="t" style="top:276px;line-height:14px;font-size:11.5px;color:#fee6df;letter-spacing:-0.026px;right:596.82px;transform:scaleX(0.8600);transform-origin:100% 50%;">145,458.17</span>
<span class="t" style="top:276px;line-height:14px;font-size:11.5px;color:#fee6df;letter-spacing:-0.026px;right:504.92px;transform:scaleX(0.8600);transform-origin:100% 50%;">146,754.09</span>
<span class="t" style="top:276px;line-height:14px;font-size:11.5px;color:#fee6df;letter-spacing:-0.026px;right:413.02px;transform:scaleX(0.8600);transform-origin:100% 50%;">176,078.97</span>
<span class="t" style="top:276px;line-height:14px;font-size:11.5px;color:#fee6df;letter-spacing:-0.026px;right:321.12px;transform:scaleX(0.8600);transform-origin:100% 50%;">182,434.01</span>
<span class="t" style="top:276px;line-height:14px;font-size:11.5px;color:#fee6df;letter-spacing:-0.026px;right:229.22px;transform:scaleX(0.8600);transform-origin:100% 50%;">199,892.57</span>
<span class="t" style="top:276px;line-height:14px;font-size:11.5px;color:#fee6df;letter-spacing:-0.026px;right:137.32px;transform:scaleX(0.8600);transform-origin:100% 50%;">208,924.88</span>
<span class="t" style="top:276px;line-height:14px;font-size:11.5px;color:#fee6df;letter-spacing:-0.026px;right:45.42px;transform:scaleX(0.8600);transform-origin:100% 50%;">227,346.94</span>
<div style="left:102.4px;top:295.9px;width:156.8px;height:24.9px;background:#ebebeb;"></div>
<div style="left:102.4px;top:320.09999999999997px;width:156.8px;height:1px;background:#d9d9d9;"></div>
<span class="t" style="top:302px;line-height:14px;font-size:11.5px;color:#595959;letter-spacing:0.163px;left:110.40px;">Counterparty 2</span>
<div style="left:259.3px;top:295.4px;width:1115.4px;height:1px;background:#fcb7a8;"></div>
<span class="t" style="top:301px;line-height:14px;font-size:11.5px;color:#fee6df;letter-spacing:-0.030px;right:1056.33px;transform:scaleX(0.8600);transform-origin:100% 50%;">71,930.40</span>
<span class="t" style="top:301px;line-height:14px;font-size:11.5px;color:#fee6df;letter-spacing:-0.030px;right:964.43px;transform:scaleX(0.8600);transform-origin:100% 50%;">97,137.53</span>
<span class="t" style="top:301px;line-height:14px;font-size:11.5px;color:#fee6df;letter-spacing:-0.026px;right:872.52px;transform:scaleX(0.8600);transform-origin:100% 50%;">123,396.88</span>
<span class="t" style="top:301px;line-height:14px;font-size:11.5px;color:#fee6df;letter-spacing:-0.026px;right:780.62px;transform:scaleX(0.8600);transform-origin:100% 50%;">150,646.08</span>
<span class="t" style="top:301px;line-height:14px;font-size:11.5px;color:#fee6df;letter-spacing:-0.026px;right:688.72px;transform:scaleX(0.8600);transform-origin:100% 50%;">131,120.55</span>
<span class="t" style="top:301px;line-height:14px;font-size:11.5px;color:#fee6df;letter-spacing:-0.026px;right:596.82px;transform:scaleX(0.8600);transform-origin:100% 50%;">140,810.18</span>
<span class="t" style="top:301px;line-height:14px;font-size:11.5px;color:#fee6df;letter-spacing:-0.026px;right:504.92px;transform:scaleX(0.8600);transform-origin:100% 50%;">137,146.53</span>
<span class="t" style="top:301px;line-height:14px;font-size:11.5px;color:#fee6df;letter-spacing:-0.026px;right:413.02px;transform:scaleX(0.8600);transform-origin:100% 50%;">160,044.77</span>
<span class="t" style="top:301px;line-height:14px;font-size:11.5px;color:#fee6df;letter-spacing:-0.026px;right:321.12px;transform:scaleX(0.8600);transform-origin:100% 50%;">181,243.73</span>
<span class="t" style="top:301px;line-height:14px;font-size:11.5px;color:#fee6df;letter-spacing:-0.026px;right:229.22px;transform:scaleX(0.8600);transform-origin:100% 50%;">211,645.89</span>
<span class="t" style="top:301px;line-height:14px;font-size:11.5px;color:#fee6df;letter-spacing:-0.026px;right:137.32px;transform:scaleX(0.8600);transform-origin:100% 50%;">198,773.70</span>
<span class="t" style="top:301px;line-height:14px;font-size:11.5px;color:#fee6df;letter-spacing:-0.026px;right:45.42px;transform:scaleX(0.8600);transform-origin:100% 50%;">230,557.02</span>
<div style="left:102.4px;top:320.8px;width:156.8px;height:24.9px;background:#ebebeb;"></div>
<div style="left:102.4px;top:345.0px;width:156.8px;height:1px;background:#d9d9d9;"></div>
<span class="t" style="top:326px;line-height:14px;font-size:11.5px;color:#595959;letter-spacing:0.163px;left:110.40px;">Counterparty 3</span>
<div style="left:259.3px;top:320.3px;width:1115.4px;height:1px;background:#fcb7a8;"></div>
<span class="t" style="top:326px;line-height:14px;font-size:11.5px;color:#fee6df;letter-spacing:-0.030px;right:1056.33px;transform:scaleX(0.8600);transform-origin:100% 50%;">75,122.16</span>
<span class="t" style="top:326px;line-height:14px;font-size:11.5px;color:#fee6df;letter-spacing:-0.026px;right:964.42px;transform:scaleX(0.8600);transform-origin:100% 50%;">102,651.63</span>
<span class="t" style="top:326px;line-height:14px;font-size:11.5px;color:#fee6df;letter-spacing:-0.026px;right:872.52px;transform:scaleX(0.8600);transform-origin:100% 50%;">130,418.87</span>
<span class="t" style="top:326px;line-height:14px;font-size:11.5px;color:#fee6df;letter-spacing:-0.026px;right:780.62px;transform:scaleX(0.8600);transform-origin:100% 50%;">156,600.44</span>
<span class="t" style="top:326px;line-height:14px;font-size:11.5px;color:#fee6df;letter-spacing:-0.026px;right:688.72px;transform:scaleX(0.8600);transform-origin:100% 50%;">138,768.38</span>
<span class="t" style="top:326px;line-height:14px;font-size:11.5px;color:#fee6df;letter-spacing:-0.026px;right:596.82px;transform:scaleX(0.8600);transform-origin:100% 50%;">152,580.38</span>
<span class="t" style="top:326px;line-height:14px;font-size:11.5px;color:#fee6df;letter-spacing:-0.026px;right:504.92px;transform:scaleX(0.8600);transform-origin:100% 50%;">144,288.86</span>
<span class="t" style="top:326px;line-height:14px;font-size:11.5px;color:#fee6df;letter-spacing:-0.026px;right:413.02px;transform:scaleX(0.8600);transform-origin:100% 50%;">170,730.42</span>
<span class="t" style="top:326px;line-height:14px;font-size:11.5px;color:#fee6df;letter-spacing:-0.026px;right:321.12px;transform:scaleX(0.8600);transform-origin:100% 50%;">192,829.07</span>
<span class="t" style="top:326px;line-height:14px;font-size:11.5px;color:#fee6df;letter-spacing:-0.026px;right:229.22px;transform:scaleX(0.8600);transform-origin:100% 50%;">229,275.30</span>
<span class="t" style="top:326px;line-height:14px;font-size:11.5px;color:#fee6df;letter-spacing:-0.026px;right:137.32px;transform:scaleX(0.8600);transform-origin:100% 50%;">208,604.53</span>
<span class="t" style="top:326px;line-height:14px;font-size:11.5px;color:#fee6df;letter-spacing:-0.026px;right:45.42px;transform:scaleX(0.8600);transform-origin:100% 50%;">244,985.56</span>
<div style="left:102.4px;top:345.7px;width:156.8px;height:24.9px;background:#ebebeb;"></div>
<div style="left:102.4px;top:369.9px;width:156.8px;height:1px;background:#d9d9d9;"></div>
<span class="t" style="top:351px;line-height:14px;font-size:11.5px;color:#595959;letter-spacing:0.163px;left:110.40px;">Counterparty 4</span>
<div style="left:259.3px;top:345.2px;width:1115.4px;height:1px;background:#fcb7a8;"></div>
<span class="t" style="top:351px;line-height:14px;font-size:11.5px;color:#fee6df;letter-spacing:-0.030px;right:1056.33px;transform:scaleX(0.8600);transform-origin:100% 50%;">77,228.39</span>
<span class="t" style="top:351px;line-height:14px;font-size:11.5px;color:#fee6df;letter-spacing:-0.026px;right:964.42px;transform:scaleX(0.8600);transform-origin:100% 50%;">118,180.91</span>
<span class="t" style="top:351px;line-height:14px;font-size:11.5px;color:#fee6df;letter-spacing:-0.026px;right:872.52px;transform:scaleX(0.8600);transform-origin:100% 50%;">141,976.46</span>
<span class="t" style="top:351px;line-height:14px;font-size:11.5px;color:#fee6df;letter-spacing:-0.026px;right:780.62px;transform:scaleX(0.8600);transform-origin:100% 50%;">174,739.30</span>
<span class="t" style="top:351px;line-height:14px;font-size:11.5px;color:#fee6df;letter-spacing:-0.026px;right:688.72px;transform:scaleX(0.8600);transform-origin:100% 50%;">140,450.59</span>
<span class="t" style="top:351px;line-height:14px;font-size:11.5px;color:#fee6df;letter-spacing:-0.026px;right:596.82px;transform:scaleX(0.8600);transform-origin:100% 50%;">149,428.37</span>
<span class="t" style="top:351px;line-height:14px;font-size:11.5px;color:#fee6df;letter-spacing:-0.026px;right:504.92px;transform:scaleX(0.8600);transform-origin:100% 50%;">148,409.55</span>
<span class="t" style="top:351px;line-height:14px;font-size:11.5px;color:#fee6df;letter-spacing:-0.026px;right:413.02px;transform:scaleX(0.8600);transform-origin:100% 50%;">195,702.74</span>
<span class="t" style="top:351px;line-height:14px;font-size:11.5px;color:#fee6df;letter-spacing:-0.026px;right:321.12px;transform:scaleX(0.8600);transform-origin:100% 50%;">199,943.98</span>
<span class="t" style="top:351px;line-height:14px;font-size:11.5px;color:#fee6df;letter-spacing:-0.026px;right:229.22px;transform:scaleX(0.8600);transform-origin:100% 50%;">231,138.13</span>
<span class="t" style="top:351px;line-height:14px;font-size:11.5px;color:#fee6df;letter-spacing:-0.026px;right:137.32px;transform:scaleX(0.8600);transform-origin:100% 50%;">238,476.19</span>
<span class="t" style="top:351px;line-height:14px;font-size:11.5px;color:#fee6df;letter-spacing:-0.026px;right:45.42px;transform:scaleX(0.8600);transform-origin:100% 50%;">270,612.63</span>
<div style="left:350.40000000000003px;top:271px;width:1.4px;height:99.2px;background:#fcb7a8;"></div>
<div style="left:442.3px;top:271px;width:1.4px;height:99.2px;background:#fcb7a8;"></div>
<div style="left:534.2px;top:271px;width:1.4px;height:99.2px;background:#fcb7a8;"></div>
<div style="left:626.0999999999999px;top:271px;width:1.4px;height:99.2px;background:#fcb7a8;"></div>
<div style="left:718.0px;top:271px;width:1.4px;height:99.2px;background:#fcb7a8;"></div>
<div style="left:809.9000000000001px;top:271px;width:1.4px;height:99.2px;background:#fcb7a8;"></div>
<div style="left:901.8px;top:271px;width:1.4px;height:99.2px;background:#fcb7a8;"></div>
<div style="left:993.7px;top:271px;width:1.4px;height:99.2px;background:#fcb7a8;"></div>
<div style="left:1085.6px;top:271px;width:1.4px;height:99.2px;background:#fcb7a8;"></div>
<div style="left:1177.5px;top:271px;width:1.4px;height:99.2px;background:#fcb7a8;"></div>
<div style="left:1269.4px;top:271px;width:1.4px;height:99.2px;background:#fcb7a8;"></div>
<div style="left:1361.3000000000002px;top:271px;width:1.4px;height:99.2px;background:#fcb7a8;"></div>
<div style="left:102.4px;top:370.6px;width:156.8px;height:4.9px;background:#ebebeb;"></div>
<div style="left:259.3px;top:370px;width:1115.4px;height:6px;background:#fff;"></div>
<div style="left:350.6px;top:370.2px;width:1px;height:5.8px;background:#d9d9d9;"></div>
<div style="left:442.5px;top:370.2px;width:1px;height:5.8px;background:#d9d9d9;"></div>
<div style="left:534.4000000000001px;top:370.2px;width:1px;height:5.8px;background:#d9d9d9;"></div>
<div style="left:626.3px;top:370.2px;width:1px;height:5.8px;background:#d9d9d9;"></div>
<div style="left:718.2px;top:370.2px;width:1px;height:5.8px;background:#d9d9d9;"></div>
<div style="left:810.1000000000001px;top:370.2px;width:1px;height:5.8px;background:#d9d9d9;"></div>
<div style="left:902.0px;top:370.2px;width:1px;height:5.8px;background:#d9d9d9;"></div>
<div style="left:993.9000000000001px;top:370.2px;width:1px;height:5.8px;background:#d9d9d9;"></div>
<div style="left:1085.8px;top:370.2px;width:1px;height:5.8px;background:#d9d9d9;"></div>
<div style="left:1177.7px;top:370.2px;width:1px;height:5.8px;background:#d9d9d9;"></div>
<div style="left:1269.6000000000001px;top:370.2px;width:1px;height:5.8px;background:#d9d9d9;"></div>
<div style="left:1361.5000000000002px;top:370.2px;width:1px;height:5.8px;background:#d9d9d9;"></div>
<div style="left:258.3px;top:246px;width:1px;height:129.5px;background:#d9d9d9;"></div>
<div style="left:11px;top:375.5px;width:1379.5px;height:16px;background:#ebebeb;"></div>
<div style="left:11px;top:375.3px;width:248px;height:1px;background:#d9d9d9;"></div>
<div style="left:259.3px;top:376px;width:1115.4px;height:15.5px;background:#eeeeee;"></div>
<div style="left:274.8px;top:376.2px;width:464.2px;height:15.3px;background:#d8d8d8;"></div>
<svg style="left:265.4px;top:380.6px" width="4.6" height="7" viewBox="0 0 4.6 7"><path d="M4.6,0 V7 L0.2,3.5 Z" fill="#505050"/></svg>
<svg style="left:1364.8px;top:380.6px" width="4.6" height="7" viewBox="0 0 4.6 7"><path d="M0,0 V7 L4.4,3.5 Z" fill="#505050"/></svg>
<div style="left:1374.7px;top:246.2px;width:15.8px;height:129.3px;background:#ececec;"></div>
<div style="left:1374.7px;top:293.4px;width:15.8px;height:16.8px;background:#d6d6d6;"></div>
<svg style="left:1379.8px;top:252.4px" width="6" height="4" viewBox="0 0 6 4"><path d="M0,4 H6 L3,0.4 Z" fill="#555"/></svg>
<svg style="left:1379.8px;top:365.6px" width="6" height="4" viewBox="0 0 6 4"><path d="M0,0 H6 L3,3.6 Z" fill="#555"/></svg>
<div style="left:10px;top:401.4px;width:1382px;height:354px;background:#fff;"></div>
<svg style="left:0;top:0" width="1401" height="765" viewBox="0 0 1401 765"><rect x="76.7" y="689.60" width="1106.8" height="1.2" fill="#e2e2e2"/><rect x="76.7" y="651.60" width="1106.8" height="1.2" fill="#e2e2e2"/><rect x="76.7" y="613.60" width="1106.8" height="1.2" fill="#e2e2e2"/><rect x="76.7" y="575.60" width="1106.8" height="1.2" fill="#e2e2e2"/><rect x="76.7" y="537.60" width="1106.8" height="1.2" fill="#e2e2e2"/><rect x="76.7" y="499.60" width="1106.8" height="1.2" fill="#e2e2e2"/><rect x="76.7" y="461.60" width="1106.8" height="1.2" fill="#e2e2e2"/><rect x="76.7" y="423.60" width="1106.8" height="1.2" fill="#e2e2e2"/><path d="M76.7,411.6 H1183.5 V715.4 H76.7 Z" fill="none" stroke="#d9d9d9" stroke-width="1"/><rect x="72.3" y="689.70" width="4.4" height="1" fill="#d9d9d9"/><rect x="72.3" y="651.70" width="4.4" height="1" fill="#d9d9d9"/><rect x="72.3" y="613.70" width="4.4" height="1" fill="#d9d9d9"/><rect x="72.3" y="575.70" width="4.4" height="1" fill="#d9d9d9"/><rect x="72.3" y="537.70" width="4.4" height="1" fill="#d9d9d9"/><rect x="72.3" y="499.70" width="4.4" height="1" fill="#d9d9d9"/><rect x="72.3" y="461.70" width="4.4" height="1" fill="#d9d9d9"/><rect x="72.3" y="423.70" width="4.4" height="1" fill="#d9d9d9"/><rect x="74.3" y="702.37" width="2.4" height="1" fill="#dedede"/><rect x="74.3" y="677.03" width="2.4" height="1" fill="#dedede"/><rect x="74.3" y="664.37" width="2.4" height="1" fill="#dedede"/><rect x="74.3" y="639.03" width="2.4" height="1" fill="#dedede"/><rect x="74.3" y="626.37" width="2.4" height="1" fill="#dedede"/><rect x="74.3" y="601.03" width="2.4" height="1" fill="#dedede"/><rect x="74.3" y="588.37" width="2.4" height="1" fill="#dedede"/><rect x="74.3" y="563.03" width="2.4" height="1" fill="#dedede"/><rect x="74.3" y="550.37" width="2.4" height="1" fill="#dedede"/><rect x="74.3" y="525.03" width="2.4" height="1" fill="#dedede"/><rect x="74.3" y="512.37" width="2.4" height="1" fill="#dedede"/><rect x="74.3" y="487.03" width="2.4" height="1" fill="#dedede"/><rect x="74.3" y="474.37" width="2.4" height="1" fill="#dedede"/><rect x="74.3" y="449.03" width="2.4" height="1" fill="#dedede"/><rect x="74.3" y="436.37" width="2.4" height="1" fill="#dedede"/><rect x="81.11" y="715.4" width="1" height="2.4" fill="#dedede"/><rect x="96.90" y="715.4" width="1" height="4.8" fill="#d9d9d9"/><rect x="112.69" y="715.4" width="1" height="2.4" fill="#dedede"/><rect x="128.48" y="715.4" width="1" height="2.4" fill="#dedede"/><rect x="144.26" y="715.4" width="1" height="2.4" fill="#dedede"/><rect x="160.05" y="715.4" width="1" height="2.4" fill="#dedede"/><rect x="175.84" y="715.4" width="1" height="4.8" fill="#d9d9d9"/><rect x="191.63" y="715.4" width="1" height="2.4" fill="#dedede"/><rect x="207.42" y="715.4" width="1" height="2.4" fill="#dedede"/><rect x="223.20" y="715.4" width="1" height="2.4" fill="#dedede"/><rect x="238.99" y="715.4" width="1" height="2.4" fill="#dedede"/><rect x="254.78" y="715.4" width="1" height="4.8" fill="#d9d9d9"/><rect x="270.57" y="715.4" width="1" height="2.4" fill="#dedede"/><rect x="286.36" y="715.4" width="1" height="2.4" fill="#dedede"/><rect x="302.14" y="715.4" width="1" height="2.4" fill="#dedede"/><rect x="317.93" y="715.4" width="1" height="2.4" fill="#dedede"/><rect x="333.72" y="715.4" width="1" height="4.8" fill="#d9d9d9"/><rect x="349.51" y="715.4" width="1" height="2.4" fill="#dedede"/><rect x="365.30" y="715.4" width="1" height="2.4" fill="#dedede"/><rect x="381.08" y="715.4" width="1" height="2.4" fill="#dedede"/><rect x="396.87" y="715.4" width="1" height="2.4" fill="#dedede"/><rect x="412.66" y="715.4" width="1" height="4.8" fill="#d9d9d9"/><rect x="428.45" y="715.4" width="1" height="2.4" fill="#dedede"/><rect x="444.24" y="715.4" width="1" height="2.4" fill="#dedede"/><rect x="460.02" y="715.4" width="1" height="2.4" fill="#dedede"/><rect x="475.81" y="715.4" width="1" height="2.4" fill="#dedede"/><rect x="491.60" y="715.4" width="1" height="4.8" fill="#d9d9d9"/><rect x="507.39" y="715.4" width="1" height="2.4" fill="#dedede"/><rect x="523.18" y="715.4" width="1" height="2.4" fill="#dedede"/><rect x="538.96" y="715.4" width="1" height="2.4" fill="#dedede"/><rect x="554.75" y="715.4" width="1" height="2.4" fill="#dedede"/><rect x="570.54" y="715.4" width="1" height="4.8" fill="#d9d9d9"/><rect x="586.33" y="715.4" width="1" height="2.4" fill="#dedede"/><rect x="602.12" y="715.4" width="1" height="2.4" fill="#dedede"/><rect x="617.90" y="715.4" width="1" height="2.4" fill="#dedede"/><rect x="633.69" y="715.4" width="1" height="2.4" fill="#dedede"/><rect x="649.48" y="715.4" width="1" height="4.8" fill="#d9d9d9"/><rect x="665.27" y="715.4" width="1" height="2.4" fill="#dedede"/><rect x="681.06" y="715.4" width="1" height="2.4" fill="#dedede"/><rect x="696.84" y="715.4" width="1" height="2.4" fill="#dedede"/><rect x="712.63" y="715.4" width="1" height="2.4" fill="#dedede"/><rect x="728.42" y="715.4" width="1" height="4.8" fill="#d9d9d9"/><rect x="744.21" y="715.4" width="1" height="2.4" fill="#dedede"/><rect x="760.00" y="715.4" width="1" height="2.4" fill="#dedede"/><rect x="775.78" y="715.4" width="1" height="2.4" fill="#dedede"/><rect x="791.57" y="715.4" width="1" height="2.4" fill="#dedede"/><rect x="807.36" y="715.4" width="1" height="4.8" fill="#d9d9d9"/><rect x="823.15" y="715.4" width="1" height="2.4" fill="#dedede"/><rect x="838.94" y="715.4" width="1" height="2.4" fill="#dedede"/><rect x="854.72" y="715.4" width="1" height="2.4" fill="#dedede"/><rect x="870.51" y="715.4" width="1" height="2.4" fill="#dedede"/><rect x="886.30" y="715.4" width="1" height="4.8" fill="#d9d9d9"/><rect x="902.09" y="715.4" width="1" height="2.4" fill="#dedede"/><rect x="917.88" y="715.4" width="1" height="2.4" fill="#dedede"/><rect x="933.66" y="715.4" width="1" height="2.4" fill="#dedede"/><rect x="949.45" y="715.4" width="1" height="2.4" fill="#dedede"/><rect x="965.24" y="715.4" width="1" height="4.8" fill="#d9d9d9"/><rect x="981.03" y="715.4" width="1" height="2.4" fill="#dedede"/><rect x="996.82" y="715.4" width="1" height="2.4" fill="#dedede"/><rect x="1012.60" y="715.4" width="1" height="2.4" fill="#dedede"/><rect x="1028.39" y="715.4" width="1" height="2.4" fill="#dedede"/><rect x="1044.18" y="715.4" width="1" height="4.8" fill="#d9d9d9"/><rect x="1059.97" y="715.4" width="1" height="2.4" fill="#dedede"/><rect x="1075.76" y="715.4" width="1" height="2.4" fill="#dedede"/><rect x="1091.54" y="715.4" width="1" height="2.4" fill="#dedede"/><rect x="1107.33" y="715.4" width="1" height="2.4" fill="#dedede"/><rect x="1123.12" y="715.4" width="1" height="4.8" fill="#d9d9d9"/><rect x="1138.91" y="715.4" width="1" height="2.4" fill="#dedede"/><rect x="1154.70" y="715.4" width="1" height="2.4" fill="#dedede"/><rect x="1170.48" y="715.4" width="1" height="2.4" fill="#dedede"/><polyline points="97.4,661.3 136.9,647.6 176.3,640.3 215.8,631.5 255.3,638.3 294.8,634.9 334.2,634.4 373.7,623.3 413.2,620.9 452.6,614.2 492.1,610.8 531.6,603.8 571.0,600.9 610.5,600.5 650.0,587.8 689.4,586.5 728.9,586.1 768.4,588.6 807.9,578.9 847.3,581.0 886.8,565.2 926.3,690.2 965.7,690.2 1005.2,690.2 1044.7,690.2 1084.2,690.2 1123.6,690.2 1163.1,690.2" fill="none" stroke="#4397aa" stroke-width="1.9" stroke-linejoin="miter" stroke-miterlimit="3"/><polyline points="97.4,662.9 136.9,653.3 176.3,643.3 215.8,633.0 255.3,640.4 294.8,636.7 334.2,638.1 373.7,629.4 413.2,621.3 452.6,609.8 492.1,614.7 531.6,602.6 571.0,605.7 610.5,601.3 650.0,593.3 689.4,578.7 728.9,690.2 768.4,690.2 807.9,690.2 847.3,690.2 886.8,690.2 926.3,690.2 965.7,690.2 1005.2,690.2 1044.7,690.2 1084.2,690.2 1123.6,690.2 1163.1,690.2" fill="none" stroke="#a93238" stroke-width="1.9" stroke-linejoin="miter" stroke-miterlimit="3"/><polyline points="97.4,661.7 136.9,651.2 176.3,640.6 215.8,630.7 255.3,637.5 294.8,632.2 334.2,635.4 373.7,625.3 413.2,616.9 452.6,603.1 492.1,610.9 531.6,597.1 571.0,599.8 610.5,595.8 650.0,572.0 689.4,690.2 728.9,690.2 768.4,690.2 807.9,690.2 847.3,690.2 886.8,690.2 926.3,690.2 965.7,690.2 1005.2,690.2 1044.7,690.2 1084.2,690.2 1123.6,690.2 1163.1,690.2" fill="none" stroke="#c47330" stroke-width="1.9" stroke-linejoin="miter" stroke-miterlimit="3"/><polyline points="97.4,660.9 136.9,645.3 176.3,636.2 215.8,623.8 255.3,636.8 294.8,633.4 334.2,633.8 373.7,615.8 413.2,614.2 452.6,602.4 492.1,599.6 531.6,587.4 571.0,581.3 610.5,586.8 650.0,554.0 689.4,550.2 728.9,552.3 768.4,565.8 807.9,534.4 847.3,543.5 886.8,593.3 926.3,690.2 965.7,690.2 1005.2,690.2 1044.7,690.2 1084.2,690.2 1123.6,690.2 1163.1,690.2" fill="none" stroke="#2f4c66" stroke-width="1.9" stroke-linejoin="miter" stroke-miterlimit="3"/><polyline points="97.4,665.6 136.9,655.6 176.3,648.4 215.8,641.7 255.3,648.0 294.8,643.5 334.2,643.5 373.7,635.1 413.2,634.0 452.6,625.4 492.1,623.9 531.6,618.8 571.0,619.0 610.5,616.9 650.0,609.5 689.4,605.5 728.9,603.6 768.4,605.3 807.9,585.1 847.3,690.2 886.8,690.2 926.3,690.2 965.7,690.2 1005.2,690.2 1044.7,690.2 1084.2,690.2 1123.6,690.2 1163.1,690.2" fill="none" stroke="#3b4260" stroke-width="1.9" stroke-linejoin="miter" stroke-miterlimit="3"/><polyline points="97.4,653.5 136.9,635.9 176.3,625.2 215.8,615.7 255.3,623.7 294.8,618.9 334.2,618.8 373.7,604.7 413.2,601.7 452.6,594.4 492.1,590.6 531.6,578.9 571.0,576.0 610.5,579.4 650.0,563.7 689.4,566.7 728.9,561.4 768.4,564.4 807.9,557.6 847.3,553.4 886.8,550.0 926.3,539.8 965.7,533.5 1005.2,524.2 1044.7,509.7 1084.2,690.2 1123.6,690.2 1163.1,690.2" fill="none" stroke="#5e3c49" stroke-width="1.9" stroke-linejoin="miter" stroke-miterlimit="3"/><polyline points="97.4,659.8 136.9,644.2 176.3,634.1 215.8,619.9 255.3,634.7 294.8,631.7 334.2,631.7 373.7,611.9 413.2,610.8 452.6,598.6 492.1,595.8 531.6,583.2 571.0,579.1 610.5,583.2 650.0,549.6 689.4,545.0 728.9,547.3 768.4,562.1 807.9,528.9 847.3,538.6 886.8,591.0 926.3,690.2 965.7,690.2 1005.2,690.2 1044.7,690.2 1084.2,690.2 1123.6,690.2 1163.1,690.2" fill="none" stroke="#a9dbe8" stroke-width="1.9" stroke-linejoin="miter" stroke-miterlimit="3"/><polyline points="97.4,660.6 136.9,645.7 176.3,635.9 215.8,614.4 255.3,631.7 294.8,626.2 334.2,628.6 373.7,609.6 413.2,607.0 452.6,582.7 492.1,591.0 531.6,570.9 571.0,577.7 610.5,569.2 650.0,549.8 689.4,553.0 728.9,596.0 768.4,690.2 807.9,690.2 847.3,690.2 886.8,690.2 926.3,690.2 965.7,690.2 1005.2,690.2 1044.7,690.2 1084.2,690.2 1123.6,690.2 1163.1,690.2" fill="none" stroke="#e0969c" stroke-width="1.9" stroke-linejoin="miter" stroke-miterlimit="3"/><polyline points="97.4,562.1 136.9,542.6 176.3,525.5 215.8,503.0 255.3,524.3 294.8,508.3 334.2,525.5 373.7,507.4 413.2,489.5 452.6,437.0 492.1,493.3 531.6,445.0 571.0,463.8 610.5,510.5 650.0,610.4 689.4,573.4 728.9,571.6 768.4,575.6 807.9,570.1 847.3,569.7 886.8,565.6 926.3,557.3 965.7,553.2 1005.2,549.0 1044.7,690.2 1084.2,690.2 1123.6,690.2 1163.1,690.2" fill="none" stroke="#f0c9ae" stroke-width="1.9" stroke-linejoin="miter" stroke-miterlimit="3"/></svg>
<span class="t" style="top:683px;line-height:14px;font-size:11px;color:#6e6e6e;-webkit-text-stroke:0.3px #6e6e6e;letter-spacing:-0.187px;right:1333.97px;transform:scaleX(0.9300);transform-origin:100% 50%;">0.00</span>
<span class="t" style="top:645px;line-height:14px;font-size:11px;color:#6e6e6e;-webkit-text-stroke:0.3px #6e6e6e;letter-spacing:-0.288px;right:1334.07px;transform:scaleX(0.9300);transform-origin:100% 50%;">100,000.00</span>
<span class="t" style="top:607px;line-height:14px;font-size:11px;color:#6e6e6e;-webkit-text-stroke:0.3px #6e6e6e;letter-spacing:-0.288px;right:1334.07px;transform:scaleX(0.9300);transform-origin:100% 50%;">200,000.00</span>
<span class="t" style="top:569px;line-height:14px;font-size:11px;color:#6e6e6e;-webkit-text-stroke:0.3px #6e6e6e;letter-spacing:-0.288px;right:1334.07px;transform:scaleX(0.9300);transform-origin:100% 50%;">300,000.00</span>
<span class="t" style="top:531px;line-height:14px;font-size:11px;color:#6e6e6e;-webkit-text-stroke:0.3px #6e6e6e;letter-spacing:-0.288px;right:1334.07px;transform:scaleX(0.9300);transform-origin:100% 50%;">400,000.00</span>
<span class="t" style="top:493px;line-height:14px;font-size:11px;color:#6e6e6e;-webkit-text-stroke:0.3px #6e6e6e;letter-spacing:-0.288px;right:1334.07px;transform:scaleX(0.9300);transform-origin:100% 50%;">500,000.00</span>
<span class="t" style="top:455px;line-height:14px;font-size:11px;color:#6e6e6e;-webkit-text-stroke:0.3px #6e6e6e;letter-spacing:-0.288px;right:1334.07px;transform:scaleX(0.9300);transform-origin:100% 50%;">600,000.00</span>
<span class="t" style="top:417px;line-height:14px;font-size:11px;color:#6e6e6e;-webkit-text-stroke:0.3px #6e6e6e;letter-spacing:-0.288px;right:1334.07px;transform:scaleX(0.9300);transform-origin:100% 50%;">700,000.00</span>
<span class="t" style="top:737px;line-height:14px;font-size:11px;color:#6e6e6e;-webkit-text-stroke:0.25px #6e6e6e;letter-spacing:-0.095px;left:44.20px;transform:scaleX(0.9300);transform-origin:0 50%;">06/12/2020 | PFE | 95%</span>
<span class="t" style="top:723px;line-height:14px;font-size:11px;color:#6e6e6e;-webkit-text-stroke:0.25px #6e6e6e;letter-spacing:-0.095px;left:123.14px;transform:scaleX(0.9300);transform-origin:0 50%;">06/02/2021 | PFE | 95%</span>
<span class="t" style="top:737px;line-height:14px;font-size:11px;color:#6e6e6e;-webkit-text-stroke:0.25px #6e6e6e;letter-spacing:-0.095px;left:202.08px;transform:scaleX(0.9300);transform-origin:0 50%;">06/04/2021 | PFE | 95%</span>
<span class="t" style="top:723px;line-height:14px;font-size:11px;color:#6e6e6e;-webkit-text-stroke:0.25px #6e6e6e;letter-spacing:-0.095px;left:281.02px;transform:scaleX(0.9300);transform-origin:0 50%;">06/06/2021 | PFE | 95%</span>
<span class="t" style="top:737px;line-height:14px;font-size:11px;color:#6e6e6e;-webkit-text-stroke:0.25px #6e6e6e;letter-spacing:-0.095px;left:359.96px;transform:scaleX(0.9300);transform-origin:0 50%;">06/08/2021 | PFE | 95%</span>
<span class="t" style="top:723px;line-height:14px;font-size:11px;color:#6e6e6e;-webkit-text-stroke:0.25px #6e6e6e;letter-spacing:-0.095px;left:438.90px;transform:scaleX(0.9300);transform-origin:0 50%;">06/10/2021 | PFE | 95%</span>
<span class="t" style="top:737px;line-height:14px;font-size:11px;color:#6e6e6e;-webkit-text-stroke:0.25px #6e6e6e;letter-spacing:-0.095px;left:517.84px;transform:scaleX(0.9300);transform-origin:0 50%;">06/12/2021 | PFE | 95%</span>
<span class="t" style="top:723px;line-height:14px;font-size:11px;color:#6e6e6e;-webkit-text-stroke:0.25px #6e6e6e;letter-spacing:-0.095px;left:596.78px;transform:scaleX(0.9300);transform-origin:0 50%;">06/02/2022 | PFE | 95%</span>
<span class="t" style="top:737px;line-height:14px;font-size:11px;color:#6e6e6e;-webkit-text-stroke:0.25px #6e6e6e;letter-spacing:-0.095px;left:675.72px;transform:scaleX(0.9300);transform-origin:0 50%;">06/04/2022 | PFE | 95%</span>
<span class="t" style="top:723px;line-height:14px;font-size:11px;color:#6e6e6e;-webkit-text-stroke:0.25px #6e6e6e;letter-spacing:-0.095px;left:754.66px;transform:scaleX(0.9300);transform-origin:0 50%;">06/06/2022 | PFE | 95%</span>
<span class="t" style="top:737px;line-height:14px;font-size:11px;color:#6e6e6e;-webkit-text-stroke:0.25px #6e6e6e;letter-spacing:-0.095px;left:833.60px;transform:scaleX(0.9300);transform-origin:0 50%;">06/08/2022 | PFE | 95%</span>
<span class="t" style="top:723px;line-height:14px;font-size:11px;color:#6e6e6e;-webkit-text-stroke:0.25px #6e6e6e;letter-spacing:-0.095px;left:912.54px;transform:scaleX(0.9300);transform-origin:0 50%;">06/10/2022 | PFE | 95%</span>
<span class="t" style="top:737px;line-height:14px;font-size:11px;color:#6e6e6e;-webkit-text-stroke:0.25px #6e6e6e;letter-spacing:-0.095px;left:991.48px;transform:scaleX(0.9300);transform-origin:0 50%;">06/12/2022 | PFE | 95%</span>
<span class="t" style="top:723px;line-height:14px;font-size:11px;color:#6e6e6e;-webkit-text-stroke:0.25px #6e6e6e;letter-spacing:-0.095px;left:1070.42px;transform:scaleX(0.9300);transform-origin:0 50%;">06/02/2023 | PFE | 95%</span>
<div style="left:1193.5px;top:411.4px;width:188.4px;height:166.8px;background:#fff;border:1px solid #e2e2e2;box-sizing:border-box;"></div>
<div style="left:1204px;top:427px;width:18px;height:1px;background:#7fb6c4;"></div>
<span class="t" style="top:420px;line-height:14px;font-size:11.5px;color:#707070;letter-spacing:0.163px;left:1234.60px;">Counterparty 1</span>
<div style="left:1204px;top:444px;width:18px;height:1px;background:#cf7f7c;"></div>
<span class="t" style="top:437px;line-height:14px;font-size:11.5px;color:#707070;letter-spacing:0.163px;left:1234.60px;">Counterparty 2</span>
<div style="left:1204px;top:460px;width:18px;height:1px;background:#dea775;"></div>
<span class="t" style="top:454px;line-height:14px;font-size:11.5px;color:#707070;letter-spacing:0.163px;left:1234.60px;">Counterparty 3</span>
<div style="left:1204px;top:477px;width:18px;height:1px;background:#7a8a9c;"></div>
<span class="t" style="top:470px;line-height:14px;font-size:11.5px;color:#707070;letter-spacing:0.163px;left:1234.60px;">Counterparty 4</span>
<div style="left:1204px;top:493px;width:18px;height:1px;background:#83879a;"></div>
<span class="t" style="top:487px;line-height:14px;font-size:11.5px;color:#707070;letter-spacing:0.163px;left:1234.60px;">Counterparty 5</span>
<div style="left:1204px;top:510px;width:18px;height:1px;background:#97818a;"></div>
<span class="t" style="top:503px;line-height:14px;font-size:11.5px;color:#707070;letter-spacing:0.163px;left:1234.60px;">Counterparty 6</span>
<div style="left:1204px;top:527px;width:18px;height:1px;background:#c5e6ef;"></div>
<span class="t" style="top:520px;line-height:14px;font-size:11.5px;color:#707070;letter-spacing:0.163px;left:1234.60px;">Counterparty 7</span>
<div style="left:1204px;top:543px;width:18px;height:1px;background:#ebbcc0;"></div>
<span class="t" style="top:537px;line-height:14px;font-size:11.5px;color:#707070;letter-spacing:0.163px;left:1234.60px;">Counterparty 8</span>
<div style="left:1204px;top:560px;width:18px;height:1px;background:#f5dac8;"></div>
<span class="t" style="top:553px;line-height:14px;font-size:11.5px;color:#707070;letter-spacing:0.163px;left:1234.60px;">Counterparty 9</span>
</body></html>
